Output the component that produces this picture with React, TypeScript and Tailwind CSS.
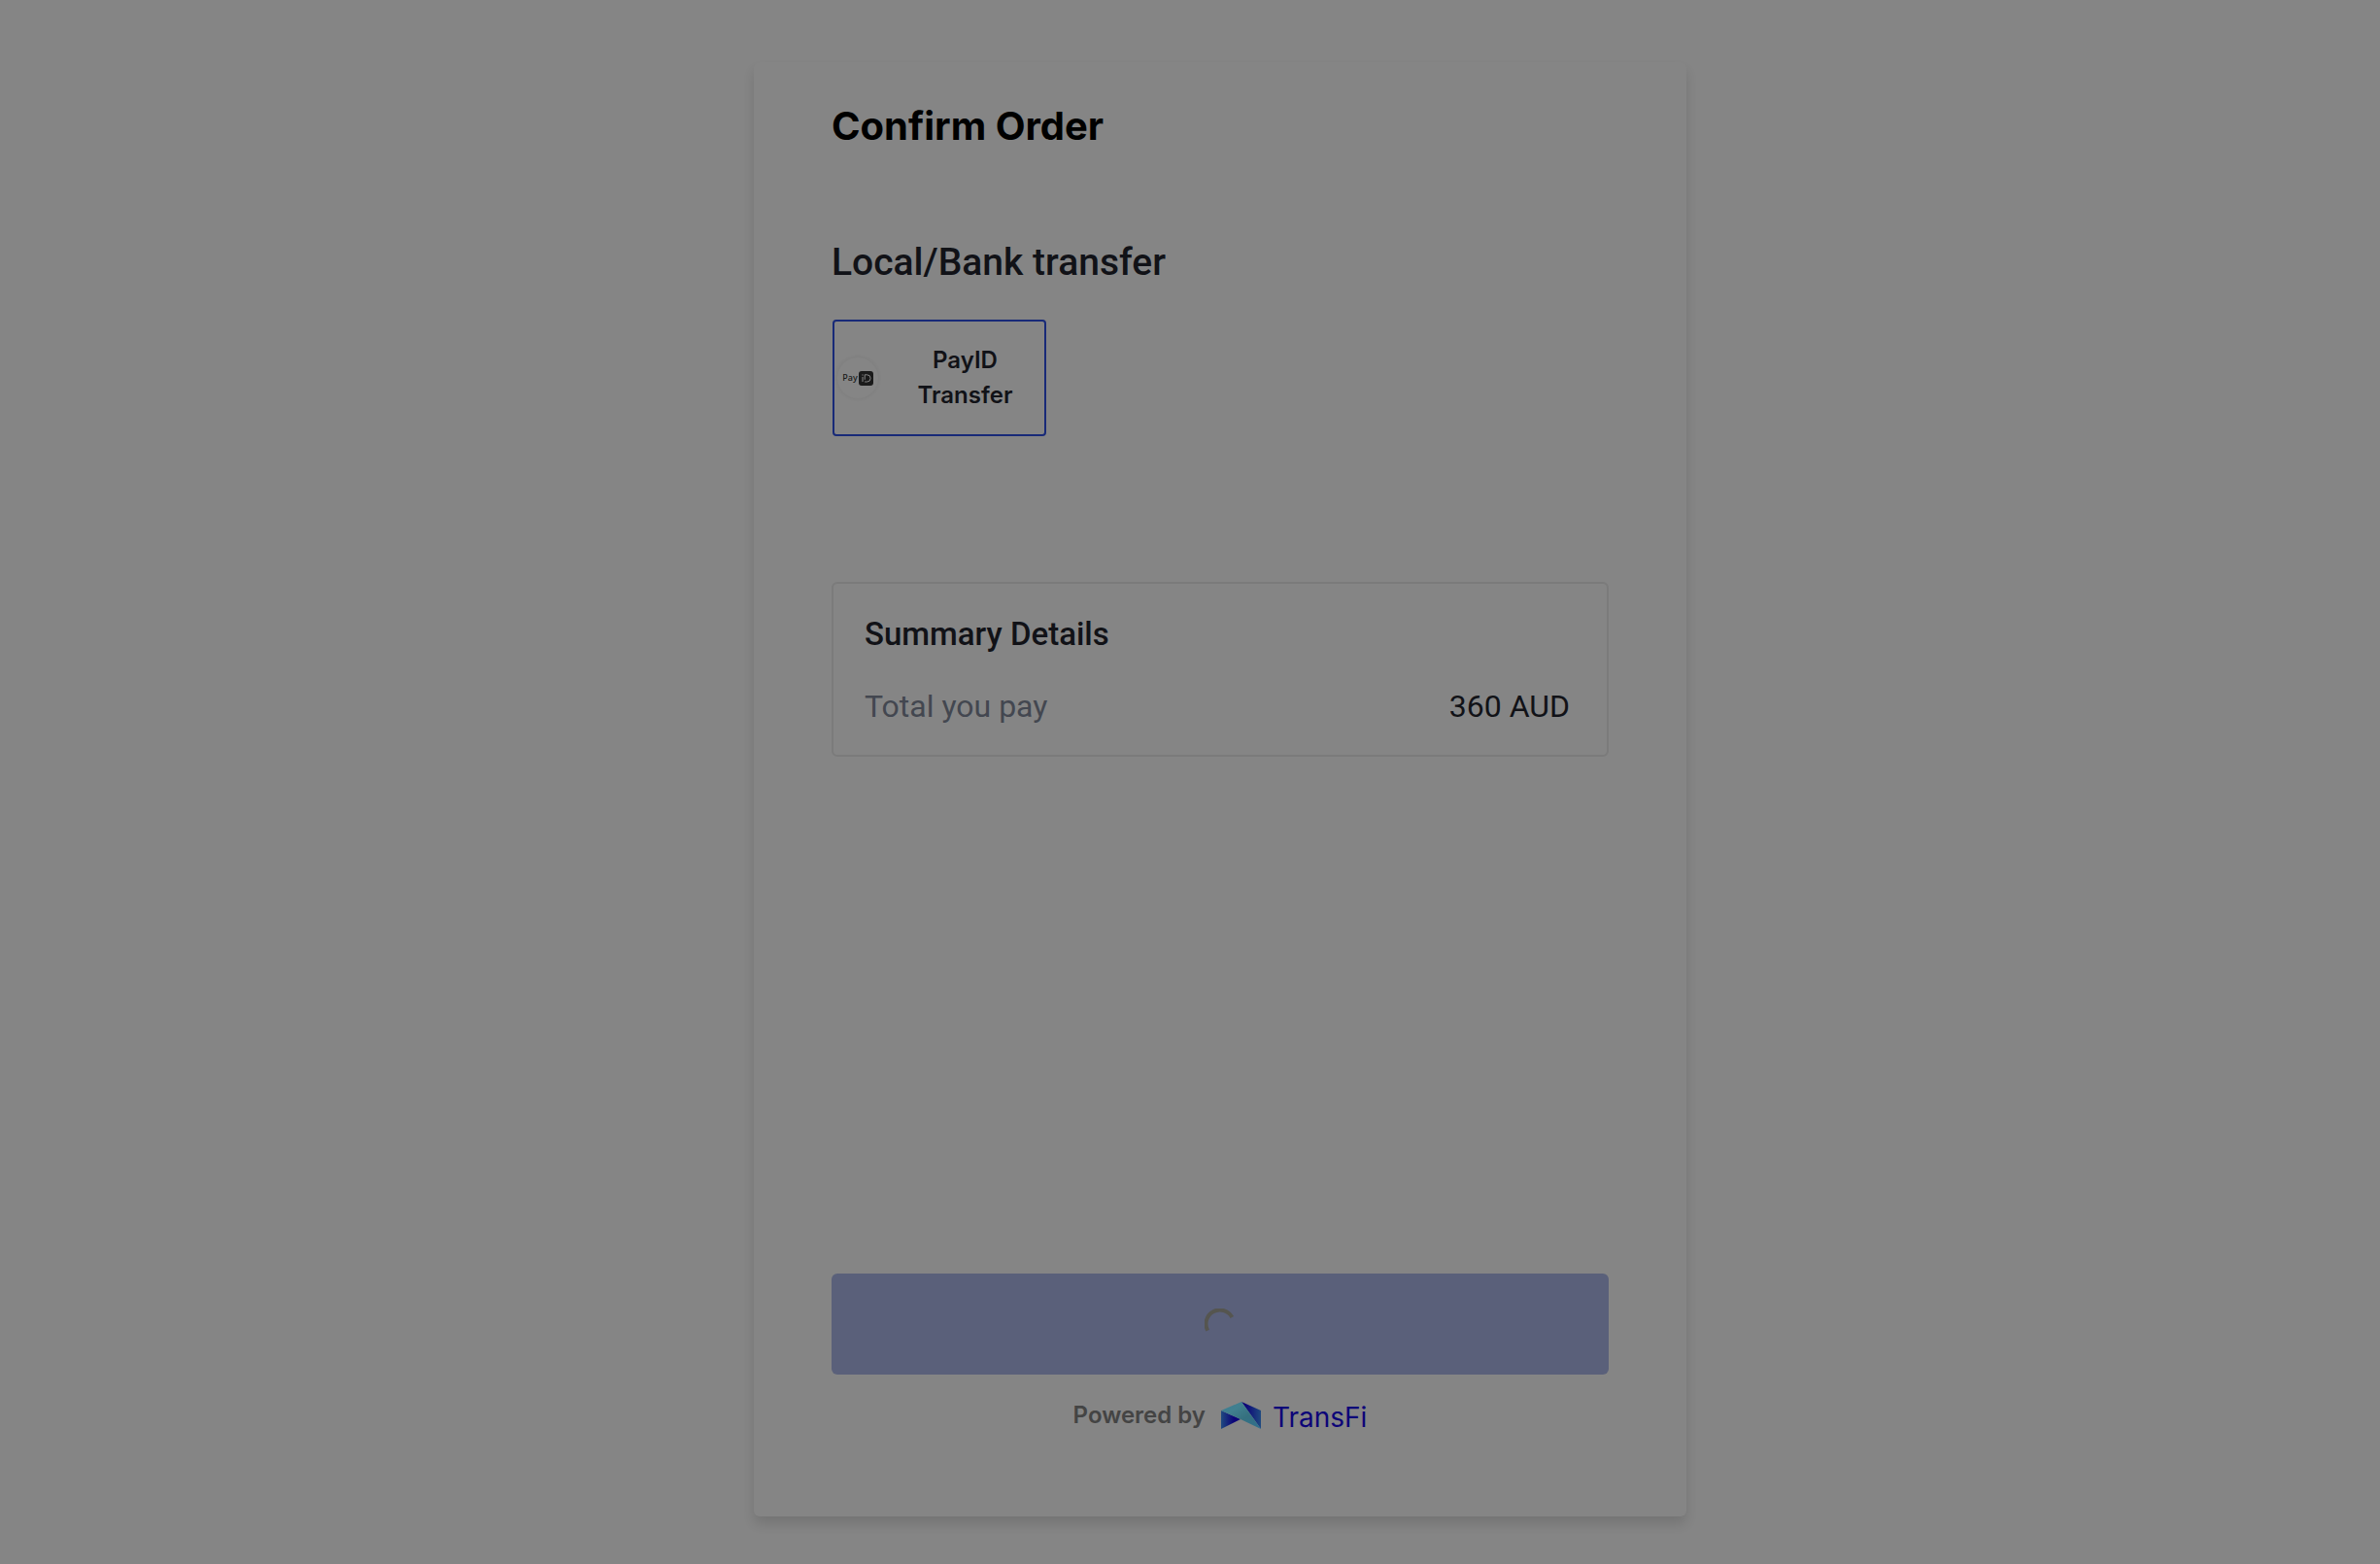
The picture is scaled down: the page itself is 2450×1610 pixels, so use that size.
const methods = [{ id: "payid", lines: ["PayID", "Transfer"] }];

const summary = [{ label: "Total you pay", value: "360 AUD" }];

function PayIdLogo() {
  return (
    <span className="flex size-[42px] shrink-0 items-center justify-center rounded-full text-[#1a1a1a] shadow-[0_0_4px_rgba(0,0,0,0.08)]">
      <span className="font-['Noto_Sans',sans-serif] text-[9px] leading-4 font-medium">Pay</span>
      <svg viewBox="0 0 15 15" className="ml-px size-[15px]" aria-hidden="true">
        <rect width="15" height="15" rx="3" fill="#1a1a1a" />
        <path
          d="M4 6v5M4 3.4v1.2M6.2 11h2.3a3.6 3.6 0 0 0 0-7.2H6.2v5"
          fill="none"
          stroke="#858585"
          strokeWidth="1"
        />
      </svg>
    </span>
  );
}

function Spinner() {
  return (
    <svg viewBox="0 0 32 32" className="size-8" role="img" aria-label="Loading">
      <path d="M3.2 22.6A14 14 0 0 1 28.3 9" fill="none" stroke="#55554f" strokeWidth="4" />
    </svg>
  );
}

function TransFiMark() {
  return (
    <svg viewBox="0 0 41 28" className="h-7 w-[41px]" aria-hidden="true">
      <defs>
        <linearGradient id="left" x1="0" y1="0" x2="1" y2="0">
          <stop offset="0" stopColor="#1f4a80" />
          <stop offset="0.65" stopColor="#0c0478" />
        </linearGradient>
        <linearGradient id="right" x1="0" y1="0" x2="1" y2="0">
          <stop offset="0.2" stopColor="#0c0478" />
          <stop offset="1" stopColor="#1f4a80" />
        </linearGradient>
        <linearGradient id="fold" x1="0" y1="0" x2="1" y2="1">
          <stop offset="0" stopColor="#3a7a94" />
          <stop offset="0.3" stopColor="#41808f" />
          <stop offset="0.6" stopColor="#35707f" />
          <stop offset="1" stopColor="#2f6f90" />
        </linearGradient>
      </defs>
      <path d="M0 9v19l20-10z" fill="url(#left)" />
      <path d="M21 0l20 9v19z" fill="url(#right)" />
      <path d="M0 9L21 0l20 28-21-10z" fill="url(#fold)" />
    </svg>
  );
}

export default function App() {
  return (
    <div className="flex min-h-screen flex-col items-center bg-[#858585] pt-16 pb-[49px] pl-[62px] font-['Roboto',sans-serif] text-[#111217]">
      <main className="flex w-full max-w-[960px] flex-1 flex-col rounded-md bg-[#858585] px-20 pt-10 pb-20 shadow-[0_8px_12px_rgba(0,0,0,0.12)]">
        <h1 className="font-['Inter',sans-serif] text-[40px] leading-[52px] font-bold text-black">
          Confirm Order
        </h1>

        <h2 className="mt-[88px] text-[39px] leading-[52px] font-medium">Local/Bank transfer</h2>
        <div className="mt-[33px] flex gap-4 px-px">
          {methods.map((method) => (
            <button
              key={method.id}
              type="button"
              className="flex h-[120px] w-[220px] items-center rounded border-2 border-[#182a78] pl-[3px]"
            >
              <PayIdLogo />
              <span className="flex-1 pr-4 pl-6 text-center font-['Inter',sans-serif] text-[24px] leading-9 font-semibold">
                {method.lines.map((line) => (
                  <span key={line} className="block">
                    {line}
                  </span>
                ))}
              </span>
            </button>
          ))}
        </div>

        <section className="mt-[150px] rounded-md border-2 border-[#7b7b7b] pt-7 pr-[38px] pb-[26px] pl-8">
          <h3 className="text-[33px] leading-[48px] font-medium">Summary Details</h3>
          <dl className="mt-[26px]">
            {summary.map((row) => (
              <div key={row.label} className="flex justify-between text-[32px] leading-[48px]">
                <dt className="text-[#434750]">{row.label}</dt>
                <dd>{row.value}</dd>
              </div>
            ))}
          </dl>
        </section>

        <button
          type="button"
          disabled
          className="mt-auto flex h-[104px] shrink-0 items-center justify-center rounded-md bg-[#5a607a]"
        >
          <Spinner />
        </button>
        <footer className="mt-[18px] flex h-12 items-center justify-center">
          <span className="font-['Inter',sans-serif] text-[24px] leading-9 font-semibold text-[#444444]">
            Powered by
          </span>
          <a href="#" className="ml-4 flex items-center gap-3 text-[#0c0478]">
            <TransFiMark />
            <span className="pt-1 font-['Inter',sans-serif] text-[28px] leading-9">TransFi</span>
          </a>
        </footer>
      </main>
    </div>
  );
}
